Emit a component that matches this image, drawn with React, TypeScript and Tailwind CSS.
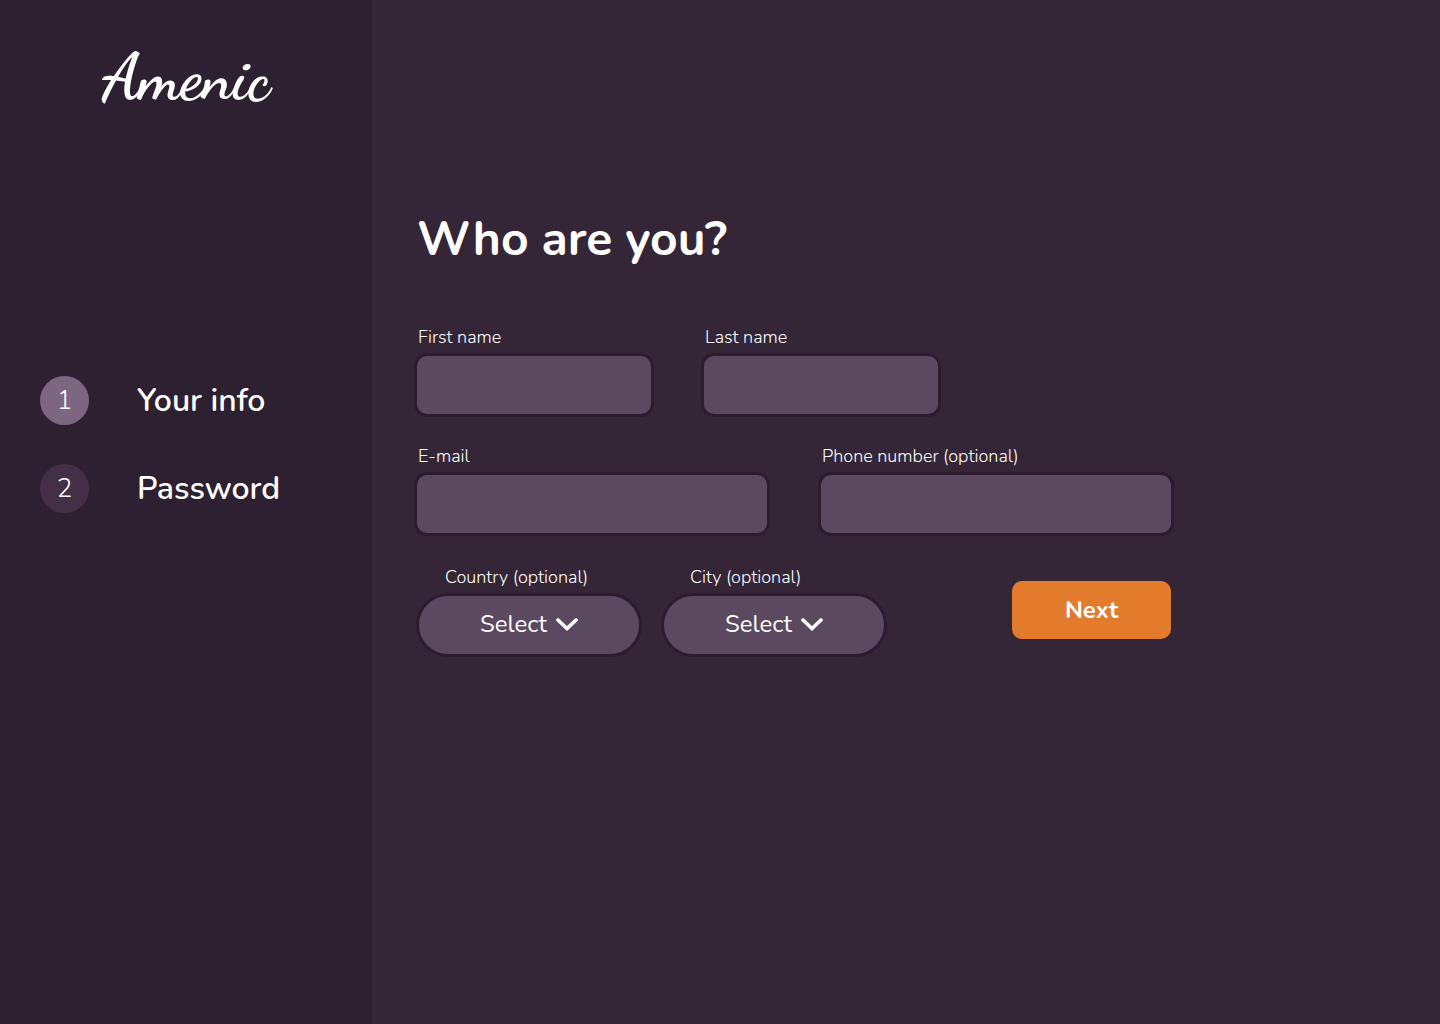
import { useId } from "react";

const steps = [
  { number: 1, title: "Your info", active: true },
  { number: 2, title: "Password", active: false },
];

function Sidebar() {
  return (
    <aside className="w-[372px] shrink-0 bg-[#2d2030]">
      <div className="flex justify-center pt-10 font-['Dancing_Script','Liberation_Serif',cursive] text-[64px] leading-[76px] font-bold">
        Amenic
      </div>
      <ol className="mt-[260px] flex flex-col gap-[39px] pl-10">
        {steps.map((step) => (
          <li
            key={step.number}
            aria-current={step.active ? "step" : undefined}
            className="flex items-center gap-12"
          >
            <span
              className={`flex size-[49px] items-center justify-center rounded-full text-[26px] leading-9 font-light ${
                step.active ? "bg-[#7d6681]" : "bg-[#433047]"
              }`}
            >
              {step.number}
            </span>
            <span className="text-[32px] leading-[44px] font-semibold">{step.title}</span>
          </li>
        ))}
      </ol>
    </aside>
  );
}

function TextField({ label, type = "text", className }: { label: string; type?: string; className: string }) {
  const id = useId();
  return (
    <div className={`flex flex-col gap-1 ${className}`}>
      <label htmlFor={id} className="pl-1 text-lg leading-6 font-light">
        {label}
      </label>
      <input
        id={id}
        type={type}
        className="h-16 w-full rounded-[13px] border-3 border-[#2b1c2f] bg-[#5b495f] px-4 text-xl outline-none"
      />
    </div>
  );
}

function SelectField({ label }: { label: string }) {
  const id = useId();
  return (
    <div className="flex w-[226px] flex-col gap-1">
      <label htmlFor={id} className="pl-[29px] text-lg leading-6 font-light">
        {label}
      </label>
      <div className="relative">
        <select
          id={id}
          className="h-16 w-full appearance-none rounded-full border-3 border-[#2b1c2f] bg-[#5b495f] pb-0.5 pl-[61px] text-2xl font-normal outline-none"
        >
          <option>Select</option>
        </select>
        <svg
          viewBox="0 0 22 14"
          className="pointer-events-none absolute top-[25px] right-[64px] h-[14px] w-[22px]"
          fill="none"
          stroke="white"
          strokeWidth="3.6"
          aria-hidden="true"
        >
          <path d="M2 2 11 10.6 20 2" strokeLinecap="round" />
        </svg>
      </div>
    </div>
  );
}

export default function App() {
  return (
    <div className="flex min-h-screen bg-[#342637] font-['Nunito','Lato',sans-serif] text-white">
      <Sidebar />
      <main className="flex-1 px-[42px] pt-[206px]">
        <h1 className="pl-[3px] text-5xl leading-[66px] font-bold">Who are you?</h1>
        <form className="mt-[53px] flex max-w-[760px] flex-col gap-[27px]" onSubmit={(e) => e.preventDefault()}>
          <div className="flex gap-[47px]">
            <TextField label="First name" className="w-[240px]" />
            <TextField label="Last name" className="w-[240px]" />
          </div>
          <div className="flex gap-12">
            <TextField label="E-mail" type="email" className="flex-1" />
            <TextField label="Phone number (optional)" type="tel" className="flex-1" />
          </div>
          <div className="flex items-start gap-[19px] pt-0.5 pl-0.5">
            <SelectField label="Country (optional)" />
            <SelectField label="City (optional)" />
            <button
              type="submit"
              className="mt-4 mr-[3px] ml-auto h-[58px] w-[159px] rounded-[10px] bg-[#e37b2d] text-2xl font-bold"
            >
              Next
            </button>
          </div>
        </form>
      </main>
    </div>
  );
}
